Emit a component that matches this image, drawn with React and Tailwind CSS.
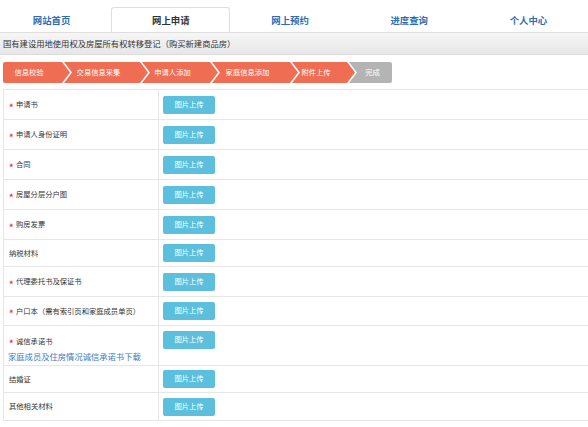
import React from "react";

const tabs = ["网站首页", "网上申请", "网上预约", "进度查询", "个人中心"];

const steps = [
  { t: "信息校验", c: "w-[67px] bg-[#ef6d52] pr-[15px] [clip-path:polygon(0_0,calc(100%_-_8px)_0,100%_50%,calc(100%_-_8px)_100%,0_100%)] rounded-l-[2px]" },
  { t: "交易信息采集", c: "w-[84px] -ml-[6px] bg-[#ef6d52] pr-[15px] [clip-path:polygon(0_0,calc(100%_-_8px)_0,100%_50%,calc(100%_-_8px)_100%,0_100%,8px_50%)]" },
  { t: "申请人添加", c: "w-[76px] -ml-[6px] bg-[#ef6d52] pr-[15px] [clip-path:polygon(0_0,calc(100%_-_8px)_0,100%_50%,calc(100%_-_8px)_100%,0_100%,8px_50%)]" },
  { t: "家庭信息添加", c: "w-[86px] -ml-[6px] bg-[#ef6d52] pr-[15px] [clip-path:polygon(0_0,calc(100%_-_8px)_0,100%_50%,calc(100%_-_8px)_100%,0_100%,8px_50%)]" },
  { t: "附件上传", c: "w-[63px] -ml-[6px] bg-[#ef6d52] pr-[15px] [clip-path:polygon(0_0,calc(100%_-_8px)_0,100%_50%,calc(100%_-_8px)_100%,0_100%,8px_50%)]" },
  { t: "完成", c: "w-[43px] -ml-[6px] bg-[#b4b4b4] pl-[4px] rounded-r-[2px] [clip-path:polygon(0_0,100%_0,100%_100%,0_100%,8px_50%)]" },
];

const rows = [
  { label: "申请书", star: true, h: "h-[30px]" },
  { label: "申请人身份证明", star: true, h: "h-[30px]" },
  { label: "合同", star: true, h: "h-[30px]" },
  { label: "房屋分层分户图", star: true, h: "h-[30px]" },
  { label: "购房发票", star: true, h: "h-[30px]" },
  { label: "纳税材料", star: false, h: "h-[27px]" },
  { label: "代理委托书及保证书", star: true, h: "h-[30px]" },
  { label: "户口本（需有索引页和家庭成员单页）", star: true, h: "h-[29px]" },
  { label: "诚信承诺书", star: true, h: "h-[40px]", link: "家庭成员及住房情况诚信承诺书下载" },
  { label: "结婚证", star: false, h: "h-[27px]" },
  { label: "其他相关材料", star: false, h: "h-[28px]" },
];

function UploadBtn() {
  return (
    <button className="w-[52px] h-[18px] bg-[#5bbfdd] rounded-[2px] text-white text-[7.3px] leading-none flex items-center justify-center">
      图片上传
    </button>
  );
}

function Star() {
  return (
    <span className="text-[#e4393c] w-[7px] h-[8px] text-[9px] font-bold leading-none pt-[2px] shrink-0 overflow-visible">
      *
    </span>
  );
}

export default function App() {
  return (
    <div
      className="w-[588px] h-[427px] overflow-hidden bg-white text-[#333]"
      style={{ fontFamily: '"Noto Sans CJK SC", "Noto Sans", sans-serif' }}
    >
      {/* tabs */}
      <div className="h-[33px] pt-[7px] border-b border-[#dedede] overflow-hidden">
        <div className="flex -ml-[8px]">
          {tabs.map((t, i) =>
            i === 1 ? (
              <div
                key={t}
                className="w-[120px] h-[26px] bg-white border border-[#dedede] border-b-white rounded-t-[3px] flex items-center justify-center text-[9.4px] font-bold text-[#333]"
              >
                {t}
              </div>
            ) : (
              <div
                key={t}
                className="w-[120px] h-[26px] flex items-center justify-center text-[9.4px] font-bold text-[#2c6cb3]"
              >
                {t}
              </div>
            )
          )}
        </div>
      </div>

      {/* title bar */}
      <div className="h-[22px] bg-gradient-to-b from-[#f6f6f6] to-[#e7e7e7] border-b border-[#dcdcdc] flex items-center pl-[3px] text-[8.3px] text-[#333]">
        国有建设用地使用权及房屋所有权转移登记（购买新建商品房）
      </div>

      {/* steps */}
      <div className="flex mt-[7px] ml-[3px] h-[21px]">
        {steps.map((s) => (
          <div key={s.t} className={"h-[21px] flex items-center justify-center text-white text-[7.3px] shrink-0 " + s.c}>
            {s.t}
          </div>
        ))}
      </div>

      {/* table */}
      <div className="mt-[6px] ml-[3px] border-t border-l border-[#e6e6e6]">
        {rows.map((r) => (
          <div key={r.label} className={"flex border-b border-[#e6e6e6] " + r.h}>
            <div className="w-[155px] border-r border-[#e6e6e6] shrink-0 pl-[5px] text-[7.3px] text-[#333]">
              {r.link ? (
                <div className="flex flex-col pt-[10px]">
                  <div className="flex items-center h-[10px] leading-[10px]">
                    <Star />
                    <span>{r.label}</span>
                  </div>
                  <div className="text-[8.3px] text-[#3b79c2] -ml-[1px] mt-[6px] leading-none">{r.link}</div>
                </div>
              ) : (
                <div className="flex items-center h-full">
                  {r.star ? <Star /> : null}
                  <span>{r.label}</span>
                </div>
              )}
            </div>
            <div className={"flex-1 pl-[4px] flex " + (r.link ? "items-start pt-[5px]" : "items-center")}>
              <UploadBtn />
            </div>
          </div>
        ))}
      </div>
    </div>
  );
}
